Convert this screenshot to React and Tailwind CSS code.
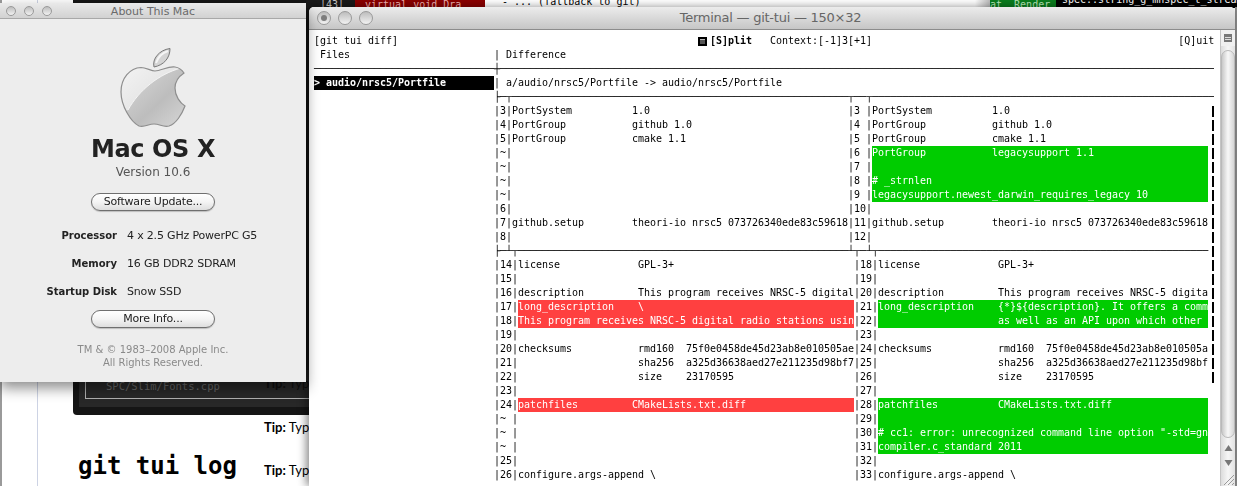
import React from "react";

const MONO = "font-['DejaVu_Sans_Mono',monospace] text-[10px] leading-[14px] tracking-[-0.02px] whitespace-pre text-black";
const h = "─";
const sp = (n) => " ".repeat(n);
const fit = (s, n) => s.padEnd(n).slice(0, n);

function Row({ children }) {
  return <div className={`${MONO} h-[14px] flex`}>{children}</div>;
}
const Bar = () => (
  <span className="w-[6px] h-[14px] flex justify-end items-center">
    <span className="block w-[2px] h-[11px] bg-black" />
  </span>
);
const tone = { r: "bg-[#ff4040] text-white", g: "bg-[#00cc00] text-white" };

function Hunk1({ l, lt = "", r, rt = "", g }) {
  return (
    <Row>
      <span>{sp(30)}{`|${l}|`}{fit(lt, 56)}{`|${r.padEnd(2)}|`}</span>
      <span className={g ? tone.g : ""}>{fit(rt, 56)}</span>
      <Bar />
    </Row>
  );
}
function Hunk2({ l, lt = "", r, rt = "", red, g, bar = true }) {
  return (
    <Row>
      <span>{sp(30)}{`|${l.padEnd(2)}|`}</span>
      <span className={red ? tone.r : ""}>{fit(lt, 56)}</span>
      <span>{`|${r}|`}</span>
      <span className={g ? tone.g : ""}>{fit(rt, 55)}</span>
      {bar && <Bar />}
    </Row>
  );
}

const kv = (k, v) => k.padEnd(20) + v;
const setup = kv("github.setup", "theori-io nrsc5 073726340ede83c59618");
const sums = (a, b) => "".padEnd(20) + a.padEnd(8) + b;

function SplitIcon() {
  return (
    <span className="w-[12px] h-[14px] shrink-0 flex items-center">
      <span className="w-[9px] h-[9px] bg-black flex items-center justify-center">
        <span className="w-[5px] h-[5px] bg-[#555] border-t border-[#bbb]" />
      </span>
    </span>
  );
}

function TerminalText() {
  return (
    <div className="pt-[4px] will-change-transform">
      <Row>
        <span>[git tui diff]{sp(50)}</span>
        <SplitIcon />
        <span className="font-bold">[S]plit</span>
        <span>{sp(3)}Context:[-1]3[+1]{sp(51)}[Q]uit</span>
      </Row>
      <Row><span>{" Files" + sp(24)}| Difference</span></Row>
      <Row><span>{h.repeat(30)}┼{h.repeat(119)}</span></Row>
      <Row>
        <span className="bg-black text-white font-bold">{fit("> audio/nrsc5/Portfile", 30)}</span>
        <span>| a/audio/nrsc5/Portfile -&gt; audio/nrsc5/Portfile</span>
      </Row>
      <Row><span>{sp(30)}├{h}┬{h.repeat(56)}┬{h.repeat(2)}┬{h.repeat(57)}</span></Row>
      <Hunk1 l="3" lt={kv("PortSystem", "1.0")} r="3" rt={kv("PortSystem", "1.0")} />
      <Hunk1 l="4" lt={kv("PortGroup", "github 1.0")} r="4" rt={kv("PortGroup", "github 1.0")} />
      <Hunk1 l="5" lt={kv("PortGroup", "cmake 1.1")} r="5" rt={kv("PortGroup", "cmake 1.1")} />
      <Hunk1 l="~" r="6" rt={kv("PortGroup", "legacysupport 1.1")} g />
      <Hunk1 l="~" r="7" g />
      <Hunk1 l="~" r="8" rt="# _strnlen" g />
      <Hunk1 l="~" r="9" rt="legacysupport.newest_darwin_requires_legacy 10" g />
      <Hunk1 l="6" r="10" />
      <Hunk1 l="7" lt={setup} r="11" rt={setup} />
      <Hunk1 l="8" r="12" />
      <Row>
        <span>{sp(30)}├{h}┴┬{h.repeat(55)}┴┬{h}┴┬{h.repeat(55)}</span>
        <Bar />
      </Row>
      <Hunk2 l="14" lt={kv("license", "GPL-3+")} r="18" rt={kv("license", "GPL-3+")} />
      <Hunk2 l="15" r="19" />
      <Hunk2 l="16" lt={kv("description", "This program receives NRSC-5 digital")} r="20" rt={kv("description", "This program receives NRSC-5 digita")} />
      <Hunk2 l="17" lt={kv("long_description", "\\")} red r="21" rt={kv("long_description", "{*}${description}. It offers a comm")} g />
      <Hunk2 l="18" lt="This program receives NRSC-5 digital radio stations usin" red r="22" rt={kv("", "as well as an API upon which other")} g />
      <Hunk2 l="19" r="23" />
      <Hunk2 l="20" lt={"checksums".padEnd(20) + "rmd160".padEnd(8) + "75f0e0458de45d23ab8e010505ae"} r="24" rt={"checksums".padEnd(20) + "rmd160".padEnd(8) + "75f0e0458de45d23ab8e010505a"} />
      <Hunk2 l="21" lt={sums("sha256", "a325d36638aed27e211235d98bf7")} r="25" rt={sums("sha256", "a325d36638aed27e211235d98bf")} />
      <Hunk2 l="22" lt={sums("size", "23170595")} r="26" rt={sums("size", "23170595")} />
      <Hunk2 l="23" r="27" bar={false} />
      <Hunk2 l="24" lt={"patchfiles".padEnd(19) + "CMakeLists.txt.diff"} red r="28" rt={kv("patchfiles", "CMakeLists.txt.diff")} g bar={false} />
      <Hunk2 l="~" r="29" g bar={false} />
      <Hunk2 l="~" r="30" rt={'# cc1: error: unrecognized command line option "-std=gn'} g bar={false} />
      <Hunk2 l="~" r="31" rt="compiler.c_standard 2011" g bar={false} />
      <Hunk2 l="25" r="32" bar={false} />
      <Hunk2 l="26" lt="configure.args-append \" r="33" rt="configure.args-append \" bar={false} />
    </div>
  );
}

function Light({ dot, size = "w-[14px] h-[14px]" }) {
  return (
    <span className={`${size} rounded-full border border-[#9a9a9a] bg-gradient-to-b from-[#bdbdbd] to-[#f2f2f2] flex items-center justify-center`}>
      {dot && <span className="w-[6px] h-[6px] rounded-full bg-[#7d7d7d]" />}
    </span>
  );
}

const APPLE = "M154 71C160 71 167 66 174 67C178 67.500 181 70 183 73C177 77 174 82 174 88C174 96 179 103 184 106C181 114 175 124 168 126C162 127.500 159 124 153 124C147 124 144 127.500 138 126C130 122 120 106 120 92C120 78 129 68 140 67.500C145 67.500 150 71 154 71Z";

function Apple() {
  return (
    <svg width="75" height="85" viewBox="115 45 75 85" className="block">
      <defs>
        <linearGradient id="lite" x1="0" y1="0" x2="1" y2="1">
          <stop offset="0" stopColor="#f6f6f6" />
          <stop offset="1" stopColor="#d9d9d9" />
        </linearGradient>
        <linearGradient id="dark" x1="0" y1="0" x2="1" y2="1">
          <stop offset="0" stopColor="#dcdcdc" />
          <stop offset="0.6" stopColor="#bdbdbd" />
          <stop offset="1" stopColor="#d6d6d6" />
        </linearGradient>
        <clipPath id="body"><path d={APPLE} /></clipPath>
      </defs>
      <path d={APPLE} fill="url(#dark)" />
      <g clipPath="url(#body)">
        <path d="M115 60H180V68C158 74 138 90 127 110L115 118Z" fill="url(#lite)" />
        <path d="M127 110C138 90 158 74 180 68" fill="none" stroke="#f4f4f4" strokeWidth="1" />
      </g>
      <path d={APPLE} fill="none" stroke="#8e8e8e" strokeWidth="1.200" />
      <path d="M153 67C151 59 158 50 169 48.500C169 58 163 65 153 67Z" fill="#d4d4d4" stroke="#777" strokeWidth="1" />
      <path d="M155 63C157 57 161 53 167 51" fill="none" stroke="#f5f5f5" strokeWidth="2" />
    </svg>
  );
}

function AquaButton({ children }) {
  return (
    <div className="w-[124px] h-[18px] rounded-full border border-[#6f6f6f] bg-gradient-to-b from-white via-[#f4f4f4] to-[#dedede] flex items-center justify-center text-[11px] tracking-[-0.2px] text-[#222] shadow-[0_1px_1px_rgba(0,0,0,0.2)]">
      {children}
    </div>
  );
}

function Spec({ k, v, cls }) {
  return (
    <div className={`flex leading-[14px] ${cls}`}>
      <span className="w-[117px] text-right text-[10px] font-bold text-[#222]">{k}</span>
      <span className="ml-[10px] text-[11px] tracking-[-0.18px] text-[#222]">{v}</span>
    </div>
  );
}

function AboutWindow() {
  return (
    <div className="absolute left-0 top-[3px] w-[306px] h-[379px] bg-[#ededed] rounded-tr-[4px] shadow-[0_6px_14px_rgba(0,0,0,0.45)] font-['DejaVu_Sans',sans-serif]">
      <div className="relative h-[16px] bg-gradient-to-b from-[#e9e9e9] to-[#d2d2d2] border-b border-[#a8a8a8] flex items-center justify-center">
        <div className="absolute left-[6px] top-[3px] flex gap-[8px]">
          <Light size="w-[10px] h-[10px]" />
          <Light size="w-[10px] h-[10px]" />
          <Light size="w-[10px] h-[10px]" />
        </div>
        <span className="mt-[3px] text-[11px] leading-[14px] text-[#6a6a6a]">About This Mac</span>
      </div>
      <div className="flex flex-col items-center">
        <div className="mt-[26px]"><Apple /></div>
        <div className="mt-[4px] text-[24px] tracking-[-0.4px] leading-[30px] font-bold text-[#222]">Mac OS X</div>
        <div className="text-[12px] leading-[16px] text-[#555]">Version 10.6</div>
        <div className="mt-[13px]"><AquaButton>Software Update...</AquaButton></div>
      </div>
      <Spec k="Processor" v="4 x 2.5 GHz PowerPC G5" cls="mt-[18px]" />
      <Spec k="Memory" v="16 GB DDR2 SDRAM" cls="mt-[14px]" />
      <Spec k="Startup Disk" v="Snow SSD" cls="mt-[14px]" />
      <div className="flex flex-col items-center">
        <div className="mt-[11px]"><AquaButton>More Info...</AquaButton></div>
        <div className="mt-[15px] text-[10px] leading-[13px] text-[#8a8a8a] text-center">
          TM &amp; © 1983–2008 Apple Inc.<br />All Rights Reserved.
        </div>
      </div>
    </div>
  );
}

function Scrollbar() {
  return (
    <div className="w-[15px] border-l border-[#c4c4c4] bg-gradient-to-r from-[#dcdcdc] via-[#f6f6f6] to-[#e2e2e2] flex flex-col">
      <div className="h-[16px] flex items-center justify-center bg-[#f0f0f0]">
        <div className="w-[8px] h-[8px] bg-[#777] flex flex-col justify-center gap-[1px] px-[1px]">
          <span className="block h-[1px] bg-[#ddd]" />
          <span className="block h-[1px] bg-[#ddd]" />
        </div>
      </div>
      <div className="mt-[4px] h-[388px] rounded-full border border-[#b9b9b9] bg-gradient-to-r from-[#c9c9c9] via-[#f8f8f8] to-[#d6d6d6]" />
      <div className="mt-[2px] h-[16px] flex items-center justify-center">
        <svg width="9" height="8" viewBox="0 0 9 8"><path d="M4.500 1L8.500 7H.5Z" fill="#777" /></svg>
      </div>
      <div className="h-[14px] flex items-center justify-center">
        <svg width="9" height="8" viewBox="0 0 9 8"><path d="M4.500 7L8.500 1H.5Z" fill="#777" /></svg>
      </div>
      <div className="flex-1 flex items-end justify-end">
        <svg width="14" height="14" viewBox="0 0 14 14" stroke="#999"><path d="M13 3L3 13M13 7L7 13M13 11L11 13" /></svg>
      </div>
    </div>
  );
}

function TerminalWindow() {
  return (
    <div className="absolute left-[309px] top-[7px] w-[926px] h-[479px] rounded-t-[5px] bg-white flex flex-col shadow-[-3px_0_8px_rgba(0,0,0,0.45)]">
      <div className="relative h-[23px] rounded-t-[5px] bg-gradient-to-b from-[#ececec] to-[#c6c6c6] border-b border-[#8c8c8c] flex items-center justify-center">
        <div className="absolute left-[8px] top-[4px] flex gap-[7px]">
          <Light dot />
          <Light />
          <Light />
        </div>
        <span className="font-['DejaVu_Sans',sans-serif] text-[13px] tracking-[-0.25px] text-[#666] ml-[-3px]">Terminal — git-tui — 150×32</span>
      </div>
      <div className="flex flex-1 min-h-0">
        <div className="w-[905px] pl-[5px] overflow-hidden"><TerminalText /></div>
        <div className="w-[6px]" />
        <Scrollbar />
      </div>
    </div>
  );
}

function Backdrop() {
  const tip = "absolute left-[264px] text-[13px] leading-[16px] font-['Lato',sans-serif] text-black";
  const peek = "absolute font-['DejaVu_Sans_Mono',monospace] text-[10px] leading-[12px] whitespace-pre";
  return (
    <>
      {/* page behind the About window */}
      <div className="absolute left-0 top-0 w-[2px] h-[486px] bg-[#9a9a9a]" />
      <div className="absolute left-[37px] top-0 w-px h-[486px] bg-[#cdd3e4]" />
      <div className="absolute left-[73px] top-0 w-[240px] h-[415px] rounded-bl-[4px] bg-[#151515] overflow-hidden">
        <div className="absolute left-[6px] top-[370px] w-[240px] h-[37px] bg-[#282828]" />
        <div className="absolute left-[12px] top-[370px] w-[240px] h-[29px] border-l border-b border-[#b0b0b0]" />
        <div className="absolute left-[33px] top-[379px] text-[10.500px] leading-[14px] text-[#666] font-['DejaVu_Sans_Mono',monospace]">SPC/Slim/Fonts.cpp</div>
      </div>
      <div className={`${tip} top-[375px] opacity-60`}><b>Tip:</b> Typ</div>
      <div className={`${tip} top-[419px]`}><b>Tip:</b> Typ</div>
      <div className={`${tip} top-[462px]`}><b>Tip:</b> Typ</div>
      <div className="absolute left-[78px] top-[451px] text-[24px] leading-[30px] font-bold text-black font-['DejaVu_Sans_Mono',monospace]">git tui log</div>

      {/* windows peeking out above the terminal */}
      <div className="absolute left-[306px] top-0 w-[179px] h-[8px] bg-[#1a1a1a]" />
      <div className="absolute left-[355px] top-0 w-[130px] h-[8px] bg-[#8b0000] overflow-hidden">
        <div className={`${peek} left-[10px] top-[-1px] text-[#f0b0b0]`}>virtual void Dra</div>
      </div>
      <div className={`${peek} left-[320px] top-[-1px] text-[#cccccc]`}>|43|</div>
      <div className={`${peek} left-[502px] top-[-4px] text-black`}>- ... (fallback to git)</div>
      <div className="absolute left-[975px] top-0 w-[15px] h-[8px] bg-gradient-to-r from-white to-[#bbbbbb]" />
      <div className="absolute left-[990px] top-0 w-[66px] h-[8px] bg-[#0a7d1e] overflow-hidden">
        <div className={`${peek} left-0 top-[-1px] text-[#b8e8b8]`}>at  Render</div>
      </div>
      <div className="absolute left-[1056px] top-0 w-[181px] h-[8px] bg-black overflow-hidden">
        <div className={`${peek} left-[6px] top-[-6px] text-white`}>spec::string_g_mnspec_t_stream_t</div>
      </div>
      <div className="absolute left-[1235px] top-[7px] w-[2px] h-[479px] bg-[#8a8a8a]" />
    </>
  );
}

export default function App() {
  return (
    <div className="relative w-[1237px] h-[486px] overflow-hidden bg-white">
      <Backdrop />
      <TerminalWindow />
      <AboutWindow />
    </div>
  );
}
